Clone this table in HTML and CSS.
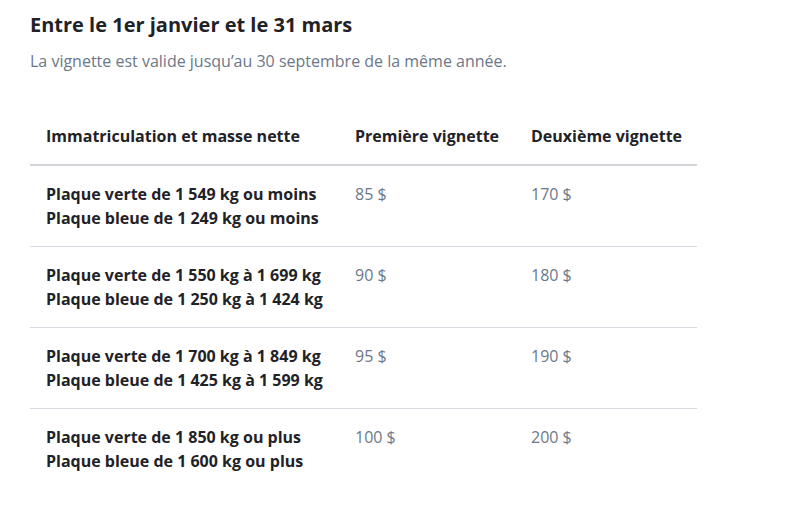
FILE: index.html
```html
<!DOCTYPE html>
<html lang="fr">
<head>
<meta charset="utf-8">
<link rel="stylesheet" href="styles.css">
</head>
<body>
<section class="block">
  <h2 class="title">Entre le 1er janvier et le 31 mars</h2>
  <p class="lead">La vignette est valide jusqu’au 30 septembre de la même année.</p>
  <table class="rates">
    <thead>
      <tr>
        <th class="c1">Immatriculation et masse nette</th>
        <th class="c2">Première vignette</th>
        <th class="c3">Deuxième vignette</th>
      </tr>
    </thead>
    <tbody>
      <tr>
        <td class="c1">Plaque verte de 1 549 kg ou moins<br>Plaque bleue de 1 249 kg ou moins</td>
        <td class="price">85 $</td>
        <td class="price">170 $</td>
      </tr>
      <tr>
        <td class="c1">Plaque verte de 1 550 kg à 1 699 kg<br>Plaque bleue de 1 250 kg à 1 424 kg</td>
        <td class="price">90 $</td>
        <td class="price">180 $</td>
      </tr>
      <tr>
        <td class="c1">Plaque verte de 1 700 kg à 1 849 kg<br>Plaque bleue de 1 425 kg à 1 599 kg</td>
        <td class="price">95 $</td>
        <td class="price">190 $</td>
      </tr>
      <tr class="last">
        <td class="c1">Plaque verte de 1 850 kg ou plus<br>Plaque bleue de 1 600 kg ou plus</td>
        <td class="price">100 $</td>
        <td class="price">200 $</td>
      </tr>
    </tbody>
  </table>
</section>
</body>
</html>
```
FILE: styles.css
```css
html, body {
  margin: 0;
  padding: 0;
  background: #ffffff;
}
body {
  font-family: "Open Sans", "Noto Sans", sans-serif;
  color: #1f2227;
}
.block {
  padding: 10px 0 0 30px;
}
.title {
  margin: 0;
  font-size: 20px;
  font-weight: 700;
  line-height: 30px;
  color: #1f2227;
}
.lead {
  margin: 9px 0 0;
  font-size: 16px;
  line-height: 24px;
  color: #6b7789;
}
.rates {
  margin-top: 37px;
  width: 667px;
  border-collapse: collapse;
  table-layout: fixed;
}
.rates th {
  text-align: left;
  font-size: 16px;
  font-weight: 700;
  line-height: 24px;
  padding: 14px 16px 16px 16px;
  color: #1f2227;
  border-bottom: 2px solid #d1d4d9;
  vertical-align: top;
  white-space: nowrap;
}
.rates th.c1 { width: 277px; }
.rates th.c2 { width: 144px; }
.rates td {
  font-size: 16px;
  line-height: 24px;
  padding: 16px 16px 16px 16px;
  vertical-align: top;
  border-bottom: 1px solid #d6dbe1;
}
.rates td.c1 {
  font-weight: 700;
  color: #1f2227;
}
.rates td.price {
  color: #6b7789;
}
.rates tr.last td {
  border-bottom: none;
}
```
